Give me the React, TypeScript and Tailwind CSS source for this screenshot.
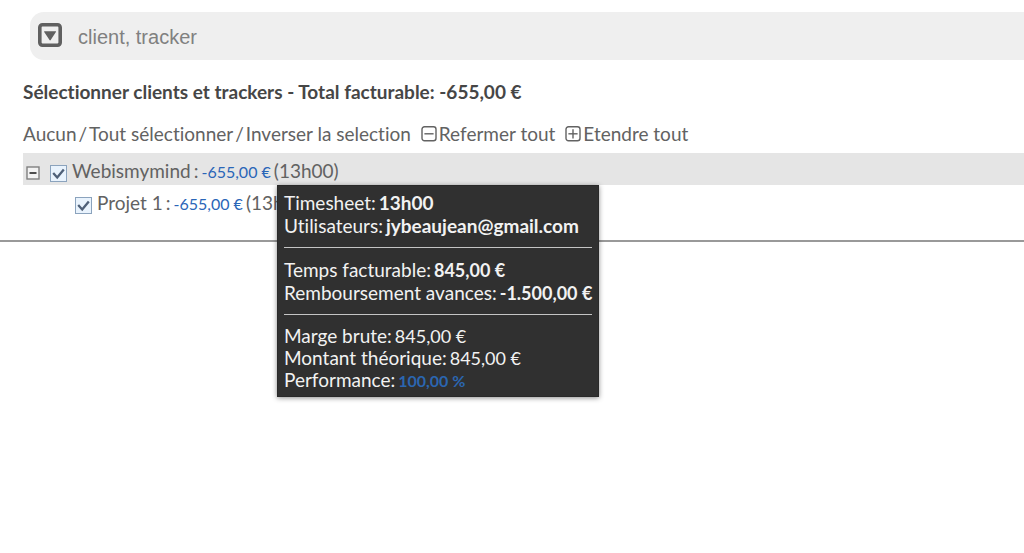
import { useState } from 'react';

type TreeCheckboxProps = {
  id: string;
  checked: boolean;
  onChange: (checked: boolean) => void;
};

const TreeCheckbox = ({ id, checked, onChange }: TreeCheckboxProps) => (
  <span className="mt-1 grid h-[18px] w-[18px] shrink-0 place-items-center">
    <input
      id={id}
      type="checkbox"
      checked={checked}
      onChange={(event) => onChange(event.target.checked)}
      className="col-start-1 row-start-1 h-[17px] w-[17px] appearance-none border border-[#8ba3bd] bg-[#e9f3fd]"
    />
    {checked && (
      <svg viewBox="0 0 17 17" className="pointer-events-none col-start-1 row-start-1 h-[17px] w-[17px]" fill="none" stroke="#4f6078" strokeWidth="2.3">
        <path d="M3.2 8 7.2 12.4l6.6-8" />
      </svg>
    )}
  </span>
);

const ToggleIcon = ({ expand }: { expand?: boolean }) => (
  <svg viewBox="0 0 16 16" className="h-4 w-4 shrink-0" fill="none" stroke="currentColor" strokeWidth="1.4">
    <rect x="1" y="0.8" width="14" height="14" rx="2.5" />
    <path d="M3.4 7.8h9.2" />
    {expand && <path d="M8 3.2v9.2" />}
  </svg>
);

const Tooltip = () => (
  <div
    role="tooltip"
    className="absolute top-full left-[254px] z-10 border border-[#292929] bg-[#303030] px-1.5 py-[5px] leading-[23px] whitespace-nowrap text-[#f2f2f2] shadow-[0_1px_5px_rgba(0,0,0,0.45)]"
  >
    <p className="flex h-[23px] items-baseline gap-[3px]">Timesheet: <b>13h00</b></p>
    <p className="flex h-[23px] items-baseline gap-[3px]">Utilisateurs: <b>jybeaujean@gmail.com</b></p>
    <hr className="my-[10px] border-[#c4c4c4]" />
    <p className="flex h-[23px] items-baseline gap-[3px]">Temps facturable: <b className="text-[18px]">845,00 €</b></p>
    <p className="flex h-[23px] items-baseline gap-[3px]">Remboursement avances: <b className="text-[18px]">-1.500,00 €</b></p>
    <hr className="my-[10px] border-[#c4c4c4]" />
    <div className="leading-[22px]">
      <p className="flex h-[22px] items-baseline gap-[3px]">Marge brute: <span className="text-[18px]">845,00 €</span></p>
      <p className="flex h-[22px] items-baseline gap-[3px]">Montant théorique: <span className="text-[18px]">845,00 €</span></p>
      <p className="flex h-[22px] items-baseline gap-[3px]">Performance: <b className="text-[16px] text-[#2b66b1]">100,00 %</b></p>
    </div>
  </div>
);

export default function App() {
  const [query, setQuery] = useState('');
  const [clientChecked, setClientChecked] = useState(true);
  const [projectChecked, setProjectChecked] = useState(true);
  const [open, setOpen] = useState(true);

  const selectAll = (value: boolean) => {
    setClientChecked(value);
    setProjectChecked(value);
  };

  const invert = () => {
    setClientChecked((current) => !current);
    setProjectChecked((current) => !current);
  };

  return (
    <div className="min-h-screen bg-white pt-3 font-['Lato',sans-serif] text-[19px] text-[#626262] [font-variant-ligatures:none]">
      <form className="ml-[30px] flex h-12 items-center gap-4 rounded-l-[14px] bg-[#efefef] pl-2" onSubmit={(event) => event.preventDefault()}>
        <button type="button" aria-label="Filtres" className="shrink-0 pb-0.5">
          <svg viewBox="0 0 24 24" className="h-6 w-6">
            <rect x="1.8" y="1.8" width="20.4" height="20.4" rx="2.6" fill="none" stroke="#606060" strokeWidth="3.6" />
            <path d="M6.4 8.3h11.4q.5 0 .1.6l-5.2 8.2q-.6.8-1.2 0L6.2 8.9q-.3-.6.2-.6z" fill="#606060" />
          </svg>
        </button>
        <input
          type="text"
          aria-label="Recherche"
          placeholder="client, tracker"
          value={query}
          onChange={(event) => setQuery(event.target.value)}
          className="min-w-0 flex-1 bg-transparent pt-0.5 font-['Liberation_Sans',sans-serif] text-[20px] text-[#606060] outline-none placeholder:text-[#808080]"
        />
      </form>

      <main className="border-b-2 border-[#999] pb-[22px] pl-[23px]">
        <h1 className="pt-5 leading-6 font-bold text-[#464646]">Sélectionner clients et trackers - Total facturable: -655,00 €</h1>

        <div className="flex items-center pt-[18px] pb-[7px] leading-6">
          <div className="flex gap-0.5">
            <button type="button" onClick={() => selectAll(false)}>Aucun</button>
            <span>/</span>
            <button type="button" onClick={() => selectAll(true)}>Tout sélectionner</button>
            <span>/</span>
            <button type="button" onClick={invert}>Inverser la selection</button>
          </div>
          <button type="button" className="ml-2.5 flex items-center gap-0.5" onClick={() => setOpen(false)}>
            <ToggleIcon />
            Refermer tout
          </button>
          <button type="button" className="ml-2.5 flex items-center gap-0.5" onClick={() => setOpen(true)}>
            <ToggleIcon expand />
            Etendre tout
          </button>
        </div>

        <ul>
          <li>
            <div className="relative flex h-8 items-center bg-[#e5e5e5] pt-1 pl-[3px]">
              <button type="button" aria-label="Replier" aria-expanded={open} className="mt-1 mr-[9px]" onClick={() => setOpen(!open)}>
                <svg viewBox="0 0 14 14" className="h-[14px] w-[14px]">
                  <rect x="1" y="1" width="12" height="12" fill="#f2f2f2" stroke="#808080" strokeWidth="1.4" />
                  <path d="M3.5 7h7" stroke="#222" strokeWidth="1.6" />
                </svg>
              </button>
              <TreeCheckbox id="client" checked={clientChecked} onChange={setClientChecked} />
              <label htmlFor="client" className="ml-[5px] flex items-baseline gap-[3px] leading-6">
                <span>Webismymind</span>
                <span>:</span>
                <span className="text-[16px] text-[#2a66b8]">-655,00 €</span>
                <span>(13h00)</span>
              </label>
              <Tooltip />
            </div>
            {open && (
              <ul>
                <li className="flex h-[33px] items-center pt-1 pl-[51px]">
                  <TreeCheckbox id="project" checked={projectChecked} onChange={setProjectChecked} />
                  <label htmlFor="project" className="ml-[5px] flex items-baseline gap-[3px] leading-6">
                    <span>Projet 1</span>
                    <span>:</span>
                    <span className="text-[16px] text-[#2a66b8]">-655,00 €</span>
                    <span>(13h00)</span>
                  </label>
                </li>
              </ul>
            )}
          </li>
        </ul>
      </main>
    </div>
  );
}
